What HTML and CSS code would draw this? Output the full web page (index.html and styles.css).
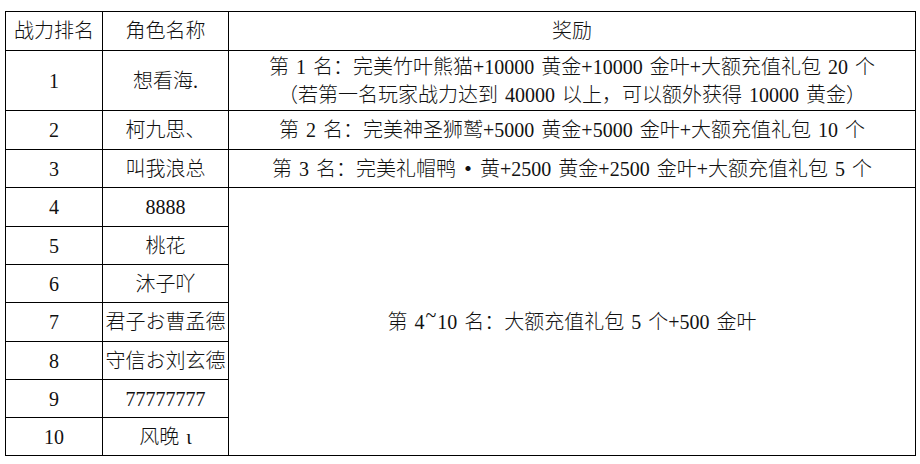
FILE: index.html
```html
<!DOCTYPE html>
<html lang="zh-CN">
<head>
<meta charset="utf-8">
<title>战力排名奖励</title>
<link rel="stylesheet" href="styles.css">
</head>
<body>
<table class="rank-table">
  <colgroup>
    <col class="col-rank">
    <col class="col-name">
    <col class="col-reward">
  </colgroup>
  <tr class="row-head">
    <td>战力排名</td>
    <td>角色名称</td>
    <td>奖励</td>
  </tr>
  <tr class="row-first">
    <td>1</td>
    <td>想看海.</td>
    <td>第 1 名：完美竹叶熊猫+10000 黄金+10000 金叶+大额充值礼包 20 个<br>（若第一名玩家战力达到 40000 以上，可以额外获得 10000 黄金）</td>
  </tr>
  <tr class="row-a">
    <td>2</td>
    <td>柯九思、</td>
    <td>第 2 名：完美神圣狮鹫+5000 黄金+5000 金叶+大额充值礼包 10 个</td>
  </tr>
  <tr class="row-b">
    <td>3</td>
    <td>叫我浪总</td>
    <td>第 3 名：完美礼帽鸭<span class="dot">·</span>黄+2500 黄金+2500 金叶+大额充值礼包 5 个</td>
  </tr>
  <tr class="row-a">
    <td>4</td>
    <td>8888</td>
    <td rowspan="7">第 4<span class="tilde">~</span>10 名：大额充值礼包 5 个+500 金叶</td>
  </tr>
  <tr class="row-b">
    <td>5</td>
    <td>桃花</td>
  </tr>
  <tr class="row-b">
    <td>6</td>
    <td>沐子吖</td>
  </tr>
  <tr class="row-a">
    <td>7</td>
    <td>君子お曹孟德</td>
  </tr>
  <tr class="row-b">
    <td>8</td>
    <td>守信お刘玄德</td>
  </tr>
  <tr class="row-b">
    <td>9</td>
    <td>77777777</td>
  </tr>
  <tr class="row-b">
    <td>10</td>
    <td>风晚 ι</td>
  </tr>
</table>
</body>
</html>
```

FILE: styles.css
```css
html, body {
  margin: 0;
  padding: 0;
  background: #fff;
}

body {
  padding: 11px 0 0 5px;
  font-family: "Liberation Serif", "Noto Sans CJK SC", serif;
  font-size: 20px;
  color: #111;
}

.rank-table {
  border-collapse: collapse;
  table-layout: fixed;
  width: 910px;
}

.col-rank { width: 97px; }
.col-name { width: 126px; }
.col-reward { width: 687px; }

.rank-table td {
  border: 1px solid #000;
  padding: 0;
  text-align: center;
  vertical-align: middle;
  white-space: nowrap;
  line-height: 28px;
  word-spacing: 2px;
  font-weight: 300;
}

.row-head { height: 39px; }
.row-first { height: 60px; }
.row-a { height: 39px; }
.row-b { height: 38px; }

.dot {
  font-family: "Noto Sans CJK SC", sans-serif;
  font-weight: 700;
  margin: 0 2px;
}

.tilde {
  position: relative;
  top: -7px;
  margin: 0 1px;
}
```
